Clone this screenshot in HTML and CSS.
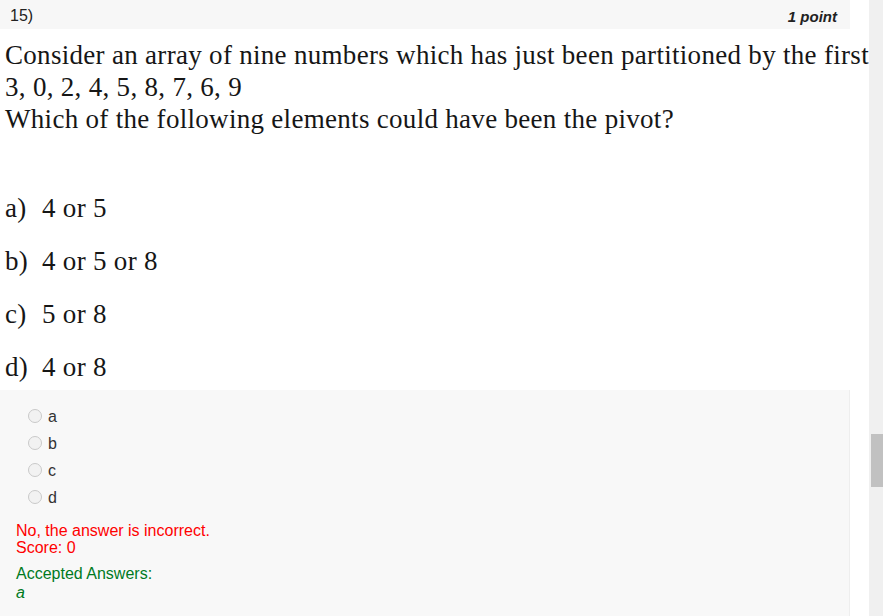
FILE: index.html
```html
<!DOCTYPE html>
<html>
<head>
<meta charset="utf-8">
<link rel="stylesheet" href="styles.css">
</head>
<body>
<div class="page">
  <div class="main">
    <div class="qhead">
      <span class="qnum">15)</span>
      <span class="qpts">1 point</span>
    </div>
    <div class="qtext">
      <div class="tline">Consider an array of nine numbers which has just been partitioned by the first</div>
      <div class="tline">3, 0, 2, 4, 5, 8, 7, 6, 9</div>
      <div class="tline">Which of the following elements could have been the pivot?</div>
    </div>
    <div class="opts">
      <div class="opt"><span class="olab">a)</span>4 or 5</div>
      <div class="opt"><span class="olab">b)</span>4 or 5 or 8</div>
      <div class="opt"><span class="olab">c)</span>5 or 8</div>
      <div class="opt"><span class="olab">d)</span>4 or 8</div>
    </div>
    <div class="panel">
      <div class="radios">
        <div class="radio"><span class="circ"></span><span class="rlab">a</span></div>
        <div class="radio"><span class="circ"></span><span class="rlab">b</span></div>
        <div class="radio"><span class="circ"></span><span class="rlab">c</span></div>
        <div class="radio"><span class="circ"></span><span class="rlab">d</span></div>
      </div>
      <div class="fb">
        <div class="wrong">No, the answer is incorrect.<br>Score: 0</div>
        <div class="acc">Accepted Answers:</div>
        <div class="accv">a</div>
      </div>
    </div>
  </div>
  <div class="sbar"><div class="thumb"></div></div>
</div>
</body>
</html>
```
FILE: styles.css
```css
html, body {
  margin: 0;
  padding: 0;
  background: #fff;
  overflow: hidden;
}
.page {
  display: flex;
  width: 883px;
  height: 616px;
  font-family: "Liberation Sans", Arial, sans-serif;
}
.main {
  width: 869px;
  overflow: hidden;
  display: flex;
  flex-direction: column;
}
.qhead {
  width: 850px;
  height: 29px;
  box-sizing: border-box;
  background: #f7f7f7;
  display: flex;
  justify-content: space-between;
  align-items: center;
  padding: 3px 13px 0 10px;
  font-size: 16px;
  color: #222;
}
.qpts {
  font-weight: bold;
  font-style: italic;
  font-size: 15px;
}
.qtext {
  margin-top: 10px;
  padding-left: 5px;
  font-family: "Liberation Serif", "Times New Roman", serif;
  font-size: 27px;
  letter-spacing: 0.3px;
  line-height: 32px;
  color: #161616;
}
.tline {
  white-space: nowrap;
}
.opts {
  margin-top: 57px;
  padding-left: 5px;
  font-family: "Liberation Serif", "Times New Roman", serif;
  font-size: 27px;
  letter-spacing: 0.3px;
  line-height: 32px;
  color: #161616;
  display: flex;
  flex-direction: column;
  gap: 21px;
}
.olab {
  display: inline-block;
  width: 37px;
}
.panel {
  margin-top: 7px;
  width: 850px;
  flex: 1;
  box-sizing: border-box;
  background: #f8f8f8;
  border-right: 1px solid #eeeeee;
  padding: 12px 0 0 0;
}
.radios {
  padding-left: 28px;
}
.radio {
  height: 27px;
  display: flex;
  align-items: center;
}
.circ {
  width: 14px;
  height: 14px;
  box-sizing: border-box;
  border-radius: 50%;
  border: 1px solid #c9c9c9;
  background: #f2f2f2;
}
.rlab {
  margin-left: 6px;
  font-size: 16px;
  color: #333;
  position: relative;
  top: 1px;
}
.fb {
  margin-top: 12px;
  padding-left: 16px;
  font-size: 16px;
}
.wrong {
  color: #ff0000;
  line-height: 17px;
}
.acc {
  margin-top: 8px;
  color: #007a1e;
  line-height: 19px;
}
.accv {
  color: #007a1e;
  font-style: italic;
  line-height: 19px;
}
.sbar {
  width: 14px;
  height: 616px;
  background: #f0f0f0;
  display: flex;
  justify-content: flex-end;
}
.thumb {
  margin-top: 434px;
  width: 12px;
  height: 53px;
  background: #c1c1c1;
}
```
